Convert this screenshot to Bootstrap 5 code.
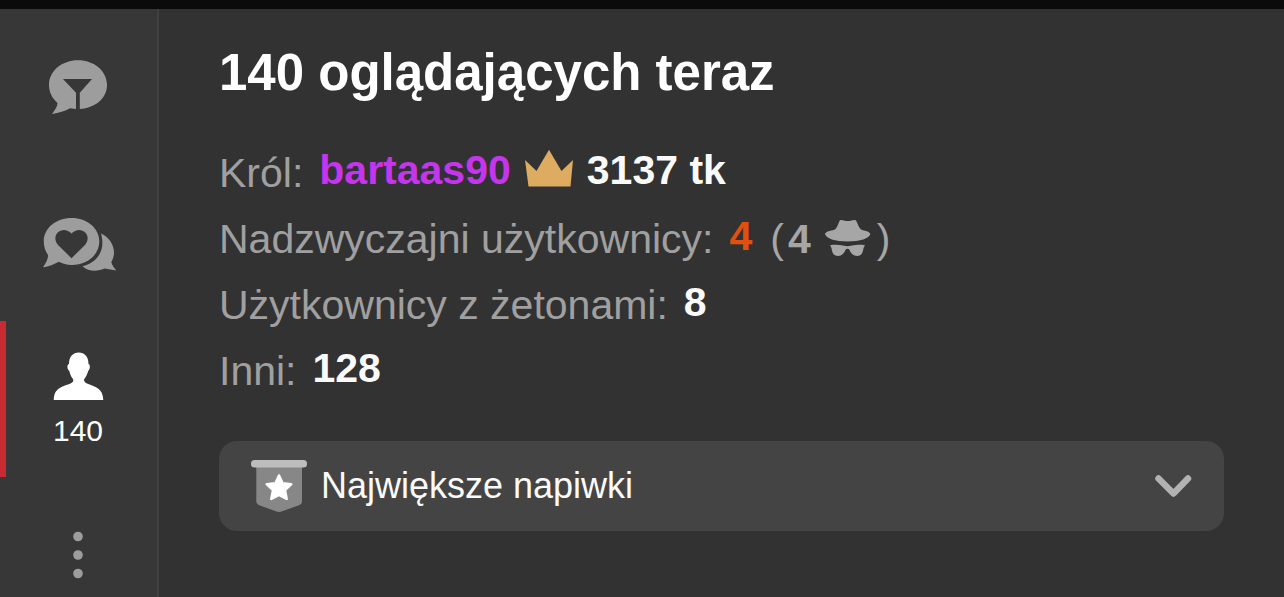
<!DOCTYPE html>
<html lang="pl" data-bs-theme="dark">
<head>
<meta charset="utf-8">
<meta name="viewport" content="width=device-width, initial-scale=1">
<title>140 oglądających teraz</title>
<link href="https://cdn.jsdelivr.net/npm/bootstrap@5.3.0/dist/css/bootstrap.min.css" rel="stylesheet">
<style>
  body { background: #323232; color: #fff; font-family: "Liberation Sans", Arial, sans-serif; }
  svg { display: block; flex: none; }
  .top-strip { height: 9px; background: #0b0b0b; flex: none; }
  .side-rail { width: 159px; flex: none; background: #373737; border-right: 2px solid #414141; }
  .rail-item { height: 156px; flex: none; gap: 13px; padding: 0 7px 0 0; border: 0; border-left: 6px solid transparent; background: none; color: #9d9d9d; font-size: 30px; line-height: 36px; }
  .rail-item.active { border-left-color: #c52b31; color: #fff; padding-top: 3px; }
  .viewers { padding: 34px 60px; min-width: 0; }
  .viewers-title { font-size: 51px; line-height: 60px; font-weight: 700; margin-bottom: 37px; }
  .stat-row { min-height: 66px; gap: 12px; font-size: 41px; line-height: 48px; }
  .stat-label { color: #a0a0a0; font-weight: 400; margin-right: 4px; }
  .stat-value { font-weight: 700; padding-bottom: 6px; margin: 0; color: #fafafa; }
  .king-name { color: #c435ec; text-decoration: none; }
  .crown-icon { margin-bottom: 8px; }
  .count-hot { color: #e2500f; }
  .hidden-users { color: #a6a6a6; gap: 4px; margin-left: 6px; }
  .hat-icon { margin: 0 2px 2px 10px; }
  .tips-toggle { margin-top: 37px; min-height: 90px; padding: 0 32px; gap: 14px; border: 0; border-radius: 18px; background: #444; color: #fafafa; font-size: 36px; line-height: 44px; }
</style>
</head>
<body>
<div class="d-flex flex-column vh-100">
  <div class="top-strip"></div>
  <div class="d-flex flex-grow-1 overflow-hidden">
    <nav class="side-rail d-flex flex-column overflow-hidden" aria-label="Panel czatu">
      <button type="button" class="rail-item d-flex flex-column align-items-center justify-content-center" aria-label="Czat">
        <svg width="60" height="54" viewBox="48 60 60 54" fill="currentColor" aria-hidden="true">
          <path d="M78 60.300C94 60.300 107 71 107 85C107 98 96 107.800 79.800 109V92.700L92 79H63L76 92.700V109L70 108.200C65 111 59 113 52 114C55 110 57.500 106 57.500 103C52 98 49 92 49 85C49 71 62 60.300 78 60.300Z"/>
        </svg>
      </button>
      <button type="button" class="rail-item d-flex flex-column align-items-center justify-content-center" aria-label="Wiadomości prywatne">
        <svg width="78" height="58" viewBox="39 214 78 58" fill="currentColor" aria-hidden="true">
          <path fill-rule="evenodd" d="M71.700 218C87 218 99.300 228 99.300 241.500C99.300 255 87 265 71.700 265C67 265 62 263.500 59 261.700C54 264 49 266.500 43 267.500C46 263 48.500 258 48 255C45 251 43.800 246 43.800 241.500C43.800 228 56 218 71.700 218ZM71.500 258.200L84.500 245.500C88.500 241.500 88.500 236 85.500 232.700C81 228.500 75.500 229.500 71.500 233.600C67.500 229.500 62 228.500 57.500 232.700C54.500 236 54.500 241.500 58.500 245.500Z"/>
          <path d="M101 233.500C109 237 114.200 245 114 253C113.800 257 112.500 260 111.300 262C112 265 114 268 116.300 270.400L104.500 268.600C97 272 88 271.500 82.500 266.200C93 264 101 256 102.200 246C102.700 241 102 237 101 233.500Z"/>
        </svg>
      </button>
      <button type="button" class="rail-item active d-flex flex-column align-items-center justify-content-center" aria-label="140 oglądających" aria-current="true">
        <svg width="52" height="48" viewBox="53 352 52 48" fill="currentColor" aria-hidden="true">
          <path d="M79.700 352.500C85.500 352.500 89.500 356.500 89.500 364C91.500 364 91.200 369.500 89.200 371C88.500 374 86.500 377.500 85 379.500C85 381.500 86 382.500 88 383.500C97 387 104 388.500 104.300 400H54.800C55 388.500 62 387 71.500 383.500C73.500 382.500 74.500 381.500 74.300 379.500C72.500 377.500 71 374 70.300 371C68 369.500 67.800 364 70 364C70 356.500 74 352.500 79.700 352.500Z"/>
        </svg>
        <span>140</span>
      </button>
      <button type="button" class="rail-item d-flex flex-column align-items-center justify-content-center" aria-label="Więcej">
        <svg width="10" height="48" viewBox="0 0 10 48" fill="currentColor" aria-hidden="true">
          <circle cx="5" cy="5.500" r="4.800"/><circle cx="5" cy="24" r="4.800"/><circle cx="5" cy="42.500" r="4.800"/>
        </svg>
      </button>
    </nav>

    <main class="viewers flex-grow-1 overflow-hidden">
      <h1 class="viewers-title">140 oglądających teraz</h1>

      <div class="stat-row d-flex align-items-center">
        <span class="stat-label">Król:</span>
        <a href="#" class="stat-value king-name">bartaas90</a>
        <svg class="crown-icon" width="52" height="38" viewBox="523 150 52 38" aria-hidden="true">
          <path fill="#deac60" d="M525 160L536.500 171L549 149.800L561.500 171L573 160L570.500 186.500H528.500Z"/>
        </svg>
        <span class="stat-value">3137 tk</span>
      </div>
      <div class="stat-row d-flex align-items-center">
        <span class="stat-label">Nadzwyczajni użytkownicy:</span>
        <span class="stat-value count-hot">4</span>
        <span class="hidden-users d-flex align-items-center">
          <span>(</span><strong>4</strong>
          <svg class="hat-icon" width="46" height="38" viewBox="825 219 46 38" fill="currentColor" aria-hidden="true">
            <path d="M825 234C826 231.500 830 231 834.500 229.800C837 228 838 224.500 839.500 221C840 219.500 842 219.800 844 220.500C846.500 221.300 849 221.300 851.500 220.500C853.500 219.800 855.500 219.500 856.300 221C858 224.500 859 228 861.500 229.800C865.500 231 869.500 231.500 870.300 234C869.500 238.500 860 241.500 847.600 241.500C835 241.500 826 238.500 825 234Z"/>
            <path d="M830 245.200C835 244.600 840 244.800 844 245.800C846.500 246.400 848.500 246.400 851 245.800C855 244.800 860 244.600 865 245.200L863.500 248C863 253 861 256 857.500 256C853 256 850.500 253 849.500 249.800C848.500 248.500 846.500 248.500 845.500 249.800C844.500 253 842 256 838 256C834 256 832 253 831.500 248Z"/>
          </svg>
          <span>)</span>
        </span>
      </div>
      <div class="stat-row d-flex align-items-center">
        <span class="stat-label">Użytkownicy z żetonami:</span>
        <span class="stat-value">8</span>
      </div>
      <div class="stat-row d-flex align-items-center">
        <span class="stat-label">Inni:</span>
        <span class="stat-value">128</span>
      </div>

      <div class="d-flex">
        <button type="button" class="tips-toggle flex-grow-1 d-flex align-items-center text-start" aria-expanded="false">
          <svg width="56" height="54" viewBox="251 460 56 54" aria-hidden="true">
            <path fill="#878787" d="M256.300 467H302V502Q302 505 299 506.200L281.500 512.500Q279 513.400 276.500 512.500L259.300 506.200Q256.300 505 256.300 502Z"/>
            <rect x="251" y="461" width="56" height="7.600" rx="3.600" fill="#bdbdbd"/>
            <path fill="#fff" stroke="#fff" stroke-width="2.500" stroke-linejoin="round" d="M279 476.500L282.600 484.300L291.300 485.200L285 491.200L286.700 500L279 495.800L271.300 500L273 491.200L266.700 485.200L275.400 484.300Z"/>
          </svg>
          <span class="flex-grow-1">Największe napiwki</span>
          <svg width="38" height="24" viewBox="0 0 38 24" fill="none" stroke="#b2b2b2" stroke-width="6.500" stroke-linecap="round" stroke-linejoin="round" aria-hidden="true">
            <path d="M4.500 4.500L19.500 19.500L34 4.500"/>
          </svg>
        </button>
      </div>
    </main>
  </div>
</div>
<script src="https://cdn.jsdelivr.net/npm/bootstrap@5.3.0/dist/js/bootstrap.bundle.min.js"></script>
</body>
</html>
